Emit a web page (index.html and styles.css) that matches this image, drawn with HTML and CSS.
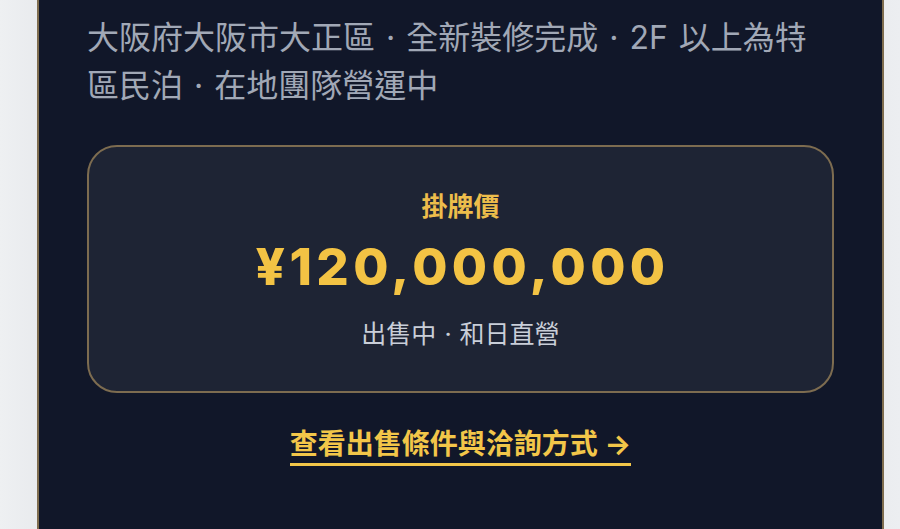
FILE: index.html
```html
<!DOCTYPE html>
<html lang="zh-Hant">
<head>
<meta charset="utf-8">
<link rel="stylesheet" href="styles.css">
</head>
<body>
<main class="page">
  <section class="card">
    <p class="desc">大阪府大阪市大正區 · 全新裝修完成 · 2F 以上為特區民泊 · 在地團隊營運中</p>
    <div class="price-box">
      <div class="label">掛牌價</div>
      <div class="price">¥120,000,000</div>
      <div class="status">出售中 · 和日直營</div>
    </div>
    <div class="cta-row">
      <a class="cta" href="#">查看出售條件與洽詢方式 →</a>
    </div>
  </section>
</main>
</body>
</html>
```

FILE: styles.css
```css
html, body {
  margin: 0;
  padding: 0;
  height: 100%;
}
body {
  background: linear-gradient(90deg, #eef0f2 0%, #e9ebee 4%, #e9ebee 96%, #eceef1 100%);
  font-family: "Inter", "Noto Sans CJK TC", sans-serif;
  overflow: hidden;
}
.page {
  padding: 0 16px 0 37px;
}
.card {
  box-sizing: border-box;
  width: 847px;
  min-height: 600px;
  background: #111729;
  border: 2px solid #7f6d4f;
  border-top: none;
  padding: 14px 48px 0 48px;
}
.desc {
  margin: 0;
  max-width: 740px;
  color: #a1a8b6;
  font-size: 32px;
  line-height: 48px;
  font-weight: 400;
  word-spacing: 2px;
}
.price-box {
  margin-top: 35px;
  box-sizing: border-box;
  height: 248px;
  background: #1e2434;
  border: 2px solid #7d6c50;
  border-radius: 30px;
  padding-top: 40px;
  display: flex;
  flex-direction: column;
  align-items: center;
}
.label {
  color: #edbd4b;
  font-size: 26px;
  font-weight: 700;
  line-height: 39px;
}
.price {
  margin-top: 12px;
  color: #f3c344;
  font-weight: 800;
  font-size: 51px;
  line-height: 58px;
  letter-spacing: 4.4px;
  padding-left: 4px;
}
.status {
  margin-top: 20px;
  color: #c9ced8;
  font-size: 25px;
  line-height: 37px;
  word-spacing: 1px;
}
.cta-row {
  display: flex;
  justify-content: center;
  margin-top: 34px;
}
.cta {
  color: #f2c649;
  text-decoration: none;
  font-size: 28px;
  font-weight: 700;
  line-height: 35px;
  padding-bottom: 1px;
  border-bottom: 3px solid #f2c649;
}
```
